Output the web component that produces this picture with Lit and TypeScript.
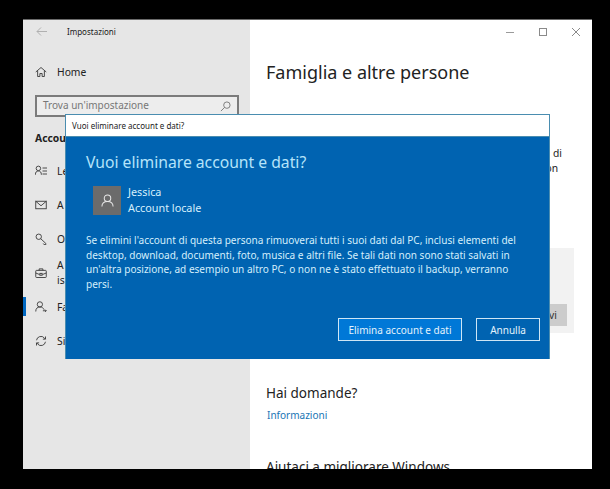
import { LitElement, html, css, svg } from "lit";
import { customElement } from "lit/decorators.js";

const ic = (body: unknown) => html`<svg class="ic" viewBox="0 0 16 16" fill="none" stroke="#3a3a3a" stroke-width="1.200">${body}</svg>`;

const items = [
  { t: "Le", icon: svg`<circle cx="4.500" cy="4.500" r="3"/><path d="M0.500 13c0-3.500 1.500-5 4-5s4 1.500 4 5M10 4h6M10 8h6M10 12h6"/>` },
  { t: "A", icon: svg`<rect x="1" y="3" width="14" height="10"/><path d="M1 3l7 6 7-6"/>` },
  { t: "O", icon: svg`<circle cx="5" cy="5" r="3.600"/><path d="M7.500 7.500l7 6.500v1.500h-2.500l-1-1.500"/>` },
  { t: "A", t2: "is", icon: svg`<rect x="1" y="4.500" width="14" height="9.500" rx="1"/><path d="M5.500 4.500V2.500h5v2M1 8l5 2M15 8l-5 2"/><rect x="6.500" y="8.500" width="3" height="2.500"/>` },
  { t: "Fa", sel: true, icon: svg`<circle cx="6.500" cy="4.500" r="3.500"/><path d="M1 14c0-4 2-6 5.500-6s4.500 1.500 5.500 3.500M10.500 13h4.500M13.500 11.500l1.500 1.500-1.500 1.500"/>` },
  { t: "Si", icon: svg`<path d="M2 7a6 6 0 0 1 10.500-3L14 5.500M14 2v3.500h-3.500M14 9a6 6 0 0 1-10.500 3L2 10.500M2 14v-3.500h3.500"/>` },
];

@customElement("app-root")
export class AppRoot extends LitElement {
  static styles = css`
    :host { display: block; width: 610px; height: 489px; background: #000; font-family: "Noto Sans", "Open Sans", sans-serif; position: relative; overflow: hidden; color: #1a1a1a; }
    .window { position: absolute; left: 23px; top: 20px; width: 569px; height: 449px; display: flex; overflow: hidden; background: #fff; box-shadow: 0 -1px 0 #6a6a6a; }
    .side { width: 227px; flex: none; background: #e6e6e6; display: flex; flex-direction: column; }
    .bar { height: 23px; display: flex; align-items: center; padding-left: 12px; gap: 19px; font-size: 8px; margin-bottom: 20px; flex: none; }
    .bar svg { width: 13px; height: 13px; flex: none; }
    .home { display: flex; align-items: center; gap: 10px; padding-left: 12px; font-size: 10.300px; height: 18px; color: #222; }
    .ic { width: 12px; height: 12px; flex: none; display: block; }
    .search { margin: 14px 11px 0 12px; height: 22px; box-sizing: border-box; border: 2px solid #7b7b7b; display: flex; align-items: center; justify-content: space-between; padding: 0 6px 2px 6px; font-size: 10px; color: #777; background: #ededed; }
    .search svg { width: 11px; height: 11px; margin-top: 2px; }
    .section { font-weight: 700; font-size: 10.300px; padding-left: 12px; margin-top: 13px; height: 16px; line-height: 16px; color: #222; white-space: nowrap; }
    .list { margin-top: 8px; display: flex; flex-direction: column; }
    .item { height: 34px; display: flex; align-items: center; gap: 10px; padding-left: 12px; position: relative; font-size: 10.300px; line-height: 15px; color: #222; }
    .item.sel::before { content: ""; position: absolute; left: 0; top: 7px; width: 3px; height: 19px; background: #0067c0; }
    .main { flex: 1; position: relative; min-width: 0; display: flex; flex-direction: column; padding-left: 16px; }
    .main > * { flex: none; }
    .controls { position: absolute; right: 0; top: 0; display: flex; }
    .controls div { width: 33px; height: 23px; display: flex; align-items: center; justify-content: center; }
    .controls svg { width: 10px; height: 10px; }
    h1 { font-weight: 400; font-size: 18px; line-height: 26px; margin: 39px 0 0; color: #222; white-space: nowrap; }
    .note { margin: 61px 30px 0 0; font-size: 10.300px; line-height: 15px; text-align: right; color: #222; }
    .note span { display: block; }
    .note .short { padding-right: 4px; }
    .panel { margin: 72px 18px 0 0; align-self: flex-end; width: 24px; height: 85px; box-sizing: border-box; background: #f2f2f2; display: flex; justify-content: flex-start; padding-top: 56px; }
    .panel span { width: 17px; height: 22px; background: #cccccc; font-size: 10.300px; line-height: 22px; text-indent: -1px; color: #333; }
    h2 { font-weight: 400; font-size: 13.500px; line-height: 20px; margin: 50px 0 0; color: #222; white-space: nowrap; }
    .link { font-size: 10px; line-height: 15px; margin: 5px 0 0 1px; color: #1a75b5; }
    h2.last { margin-top: 34px; }
    .dialog { position: absolute; left: 65px; top: 114px; width: 485px; height: 245px; box-sizing: border-box; display: flex; flex-direction: column; border: 1px solid #4a8db0; border-bottom: 0; background: #0063b1; }
    .dtitle { height: 21px; flex: none; background: #fff; font-size: 8px; display: flex; align-items: center; padding-left: 6px; color: #222; border-bottom: 1px solid #4a8db0; }
    .dbody { flex: 1; padding: 13px 9px 18px 20px; display: flex; flex-direction: column; color: #fff; }
    .dhead { font-size: 15.700px; line-height: 24px; color: #b5e3fa; }
    .user { display: flex; align-items: center; gap: 7px; margin: 10px 0 0 7px; }
    .avatar { width: 28px; height: 29px; background: #6b6b6b; display: flex; align-items: center; justify-content: center; flex: none; }
    .avatar svg { width: 13px; height: 13px; }
    .uname { font-size: 10.800px; line-height: 16px; color: #d5effc; }
    .msg { margin: 17px 0 0; font-size: 10.050px; line-height: 14.500px; color: #d5effc; width: 450px; }
    .btns { margin-top: auto; display: flex; justify-content: flex-end; gap: 14px; }
    .btn { height: 23px; box-sizing: border-box; border: 1.500px solid #cfe6f5; display: flex; align-items: center; justify-content: center; font-size: 10px; color: #e4f3fc; }
    .btn.a { width: 124px; background: #0078d7; }
    .btn.b { width: 64px; }
  `;

  render() {
    return html`
      <div class="window">
        <aside class="side">
          <div class="bar">
            <svg viewBox="0 0 13 13" fill="none" stroke="#b0b0b0" stroke-width="1"><path d="M12 6.500H2M6 2.500l-4 4 4 4"/></svg>
            <span>Impostazioni</span>
          </div>
          <div class="home">
            ${ic(svg`<path d="M1 8l7-6 7 6M3.500 6.500V14h3V10h3v4h3V6.500"/>`)}
            <span>Home</span>
          </div>
          <div class="search">
            <span>Trova un'impostazione</span>
            <svg viewBox="0 0 12 12" fill="none" stroke="#777" stroke-width="1"><circle cx="7.500" cy="4.500" r="3.500"/><path d="M5 7l-4 4"/></svg>
          </div>
          <div class="section">Account</div>
          <div class="list">
            ${items.map((i) => html`
              <div class="item ${i.sel ? "sel" : ""}">
                ${ic(i.icon)}
                <span>${i.t}${i.t2 ? html`<br />${i.t2}` : ""}</span>
              </div>`)}
          </div>
        </aside>
        <main class="main">
          <div class="controls">
            <div><svg viewBox="0 0 10 10" stroke="#9a9a9a" fill="none"><path d="M1 5.500h8"/></svg></div>
            <div><svg viewBox="0 0 10 10" stroke="#8a8a8a" fill="none"><rect x="1.500" y="1.500" width="7" height="7"/></svg></div>
            <div><svg viewBox="0 0 10 10" stroke="#8a8a8a" fill="none"><path d="M1 1l8 8M9 1l-8 8"/></svg></div>
          </div>
          <h1>Famiglia e altre persone</h1>
          <div class="note"><span>di</span><span class="short">on</span></div>
          <div class="panel"><span>vi</span></div>
          <h2>Hai domande?</h2>
          <div class="link">Informazioni</div>
          <h2 class="last">Aiutaci a migliorare Windows</h2>
        </main>
      </div>
      <section class="dialog">
        <div class="dtitle">Vuoi eliminare account e dati?</div>
        <div class="dbody">
          <div class="dhead">Vuoi eliminare account e dati?</div>
          <div class="user">
            <div class="avatar">
              <svg viewBox="0 0 14 14" fill="none" stroke="#e8e8e8" stroke-width="1.100"><circle cx="7" cy="4.500" r="3.500"/><path d="M1 13.500c0-3.500 2.500-5.500 6-5.500s6 2 6 5.500"/></svg>
            </div>
            <div class="uname">Jessica<br />Account locale</div>
          </div>
          <p class="msg">Se elimini l'account di questa persona rimuoverai tutti i suoi dati dal PC, inclusi elementi del desktop, download, documenti, foto, musica e altri file. Se tali dati non sono stati salvati in un'altra posizione, ad esempio un altro PC, o non ne è stato effettuato il backup, verranno persi.</p>
          <div class="btns">
            <div class="btn a">Elimina account e dati</div>
            <div class="btn b">Annulla</div>
          </div>
        </div>
      </section>
    `;
  }
}
